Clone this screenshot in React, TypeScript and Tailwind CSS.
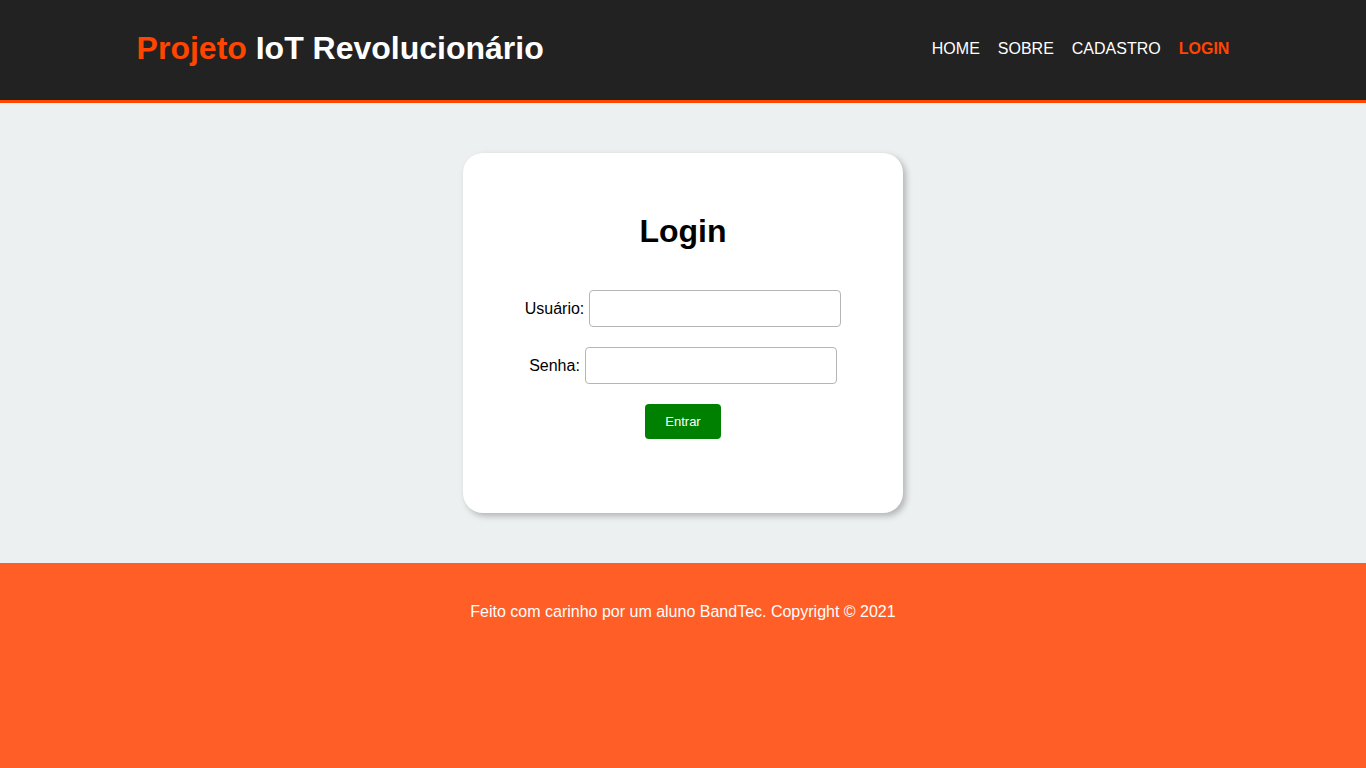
export default function App() {
  return (
    <div className="min-h-screen flex flex-col font-['Liberation_Sans',Arial,sans-serif]">
      <header className="h-[103px] bg-[#222222] border-b-[3px] border-[#ff4500] shrink-0">
        <div className="w-[80%] mx-auto h-[100px] flex items-center justify-between">
          <h1 className="text-[32px] font-bold leading-none -mt-[4px]">
            <span className="text-[#ff4500]">Projeto</span>{" "}
            <span className="text-white">IoT Revolucionário</span>
          </h1>
          <nav className="flex items-center gap-[18px] text-[16px] -mt-[2px]">
            <a className="text-white">HOME</a>
            <a className="text-white">SOBRE</a>
            <a className="text-white">CADASTRO</a>
            <a className="text-[#ff4500] font-bold">LOGIN</a>
          </nav>
        </div>
      </header>
      <main className="h-[460px] bg-[#ecf0f1] flex justify-center pt-[50px] shrink-0">
        <div className="w-[440px] h-[360px] bg-white rounded-[20px] shadow-[3px_3px_6px_rgba(0,0,0,0.25)] flex flex-col items-center">
          <h2 className="text-[32px] font-bold text-black mt-[60px] leading-[37px]">Login</h2>
          <div className="mt-[40px] flex items-center gap-[5px] text-[16px] text-black">
            <label>Usuário:</label>
            <input className="w-[252px] h-[37px] border border-[#b5b5b5] rounded-[4px] bg-white" />
          </div>
          <div className="mt-[20px] flex items-center gap-[5px] text-[16px] text-black">
            <label>Senha:</label>
            <input type="password" className="w-[252px] h-[37px] border border-[#b5b5b5] rounded-[4px] bg-white" />
          </div>
          <button className="mt-[20px] w-[76px] h-[35px] bg-[#008000] text-white text-[13px] rounded-[4px]">
            Entrar
          </button>
        </div>
      </main>
      <footer className="flex-1 bg-[#ff5e26] text-white text-[16px] text-center pt-[37px]">
        Feito com carinho por um aluno BandTec. Copyright © 2021
      </footer>
    </div>
  );
}
